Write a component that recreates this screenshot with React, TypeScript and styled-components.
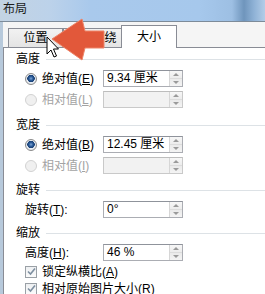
import styled, { createGlobalStyle } from "styled-components";

const GlobalStyle = createGlobalStyle`
    html, body {
        margin: 0;
        padding: 0;
        background: #f0f0f0;
    }
    * {
        box-sizing: border-box;
    }
`;

const Window = styled.div`
    position: relative;
    width: 265px;
    height: 294px;
    overflow: hidden;
    background: #f3f3f3;
    font-family: "Liberation Sans", "Noto Sans CJK SC", sans-serif;
    font-size: 12px;
    color: #000;
    display: flex;
    flex-direction: column;
`;

const TitleBar = styled.div`
    height: 22px;
    flex: none;
    padding: 0 0 0 3px;
    line-height: 19px;
    font-size: 12px;
    color: #1c1c1c;
    background: linear-gradient(90deg, #c3d3e3 0px, #bcd2ea 50px, #a9c9ec 90px, #a6c8ec 200px, #9dbfe3 232px, #6f95bc 244px, #8fb2d6 254px, #b3cde8 265px);
    border-bottom: 1px solid #7d8b99;
`;

const Body = styled.div`
    flex: 1;
    display: flex;
    flex-direction: column;
    border-left: 3px solid #b7c9db;
    background: #f5f5f5;
`;

const TabStrip = styled.div`
    height: 26px;
    flex: none;
    display: flex;
    align-items: flex-end;
    padding-left: 5px;
    position: relative;
    z-index: 1;
    margin-bottom: -1px;
`;

const Tab = styled.div<{ $active?: boolean; $w: number }>`
    width: ${p => p.$w}px;
    height: ${p => (p.$active ? 23 : 20)}px;
    display: flex;
    align-items: center;
    justify-content: center;
    border: 1px solid #898c95;
    border-bottom: ${p => (p.$active ? "none" : "1px solid #898c95")};
    margin-left: ${p => (p.$active ? -1 : 0)}px;
    background: ${p => (p.$active ? "#fff" : "linear-gradient(#f2f2f2, #e4e4e4)")};
    color: #000;
    line-height: 14px;
`;

const Panel = styled.div`
    flex: 1;
    background: #fff;
    border-top: 1px solid #898c95;
    border-left: 1px solid #898c95;
    padding-top: 2px;
`;

const Group = styled.div<{ $gap: number }>`
    margin-top: ${p => p.$gap}px;
`;

const Header = styled.div`
    height: 18px;
    display: flex;
    align-items: center;
    padding-left: 12px;
    gap: 6px;
    line-height: 14px;

    &::after {
        content: "";
        flex: 1;
        height: 1px;
        background: #dde2e6;
        margin-top: 1px;
    }
`;

const Row = styled.div<{ $h?: number }>`
    height: ${p => p.$h ?? 21}px;
    display: flex;
    align-items: center;
    padding-left: 21px;
`;

const Label = styled.div<{ $disabled?: boolean }>`
    width: 78px;
    display: flex;
    align-items: center;
    gap: 5px;
    color: ${p => (p.$disabled ? "#a3a3a3" : "#000")};
    line-height: 14px;
    white-space: nowrap;
`;

const CheckLabel = styled(Label)`
    width: auto;
`;

const Key = styled.span`
    text-decoration: underline;
`;

const Radio = styled.span<{ $checked?: boolean; $disabled?: boolean }>`
    width: 12px;
    height: 12px;
    border-radius: 50%;
    flex: none;
    border: 1px solid ${p => (p.$disabled ? "#d2d2d2" : "#8a8a8a")};
    background: ${p =>
        p.$checked
            ? "radial-gradient(circle at 50% 45%, #7fa7d6 0, #2a5a98 2px, #173e72 3.5px, #e9eef4 4px, #dfe4ea 6px)"
            : p.$disabled
            ? "#f0f0f0"
            : "linear-gradient(#e6e6e6, #fafafa)"};
`;

const Box = styled.span`
    width: 12px;
    height: 12px;
    flex: none;
    border: 1px solid #9aa0a6;
    background: linear-gradient(#eef0f2, #fbfbfb);
    display: flex;
    align-items: center;
    justify-content: center;
`;

const Field = styled.div<{ $disabled?: boolean }>`
    width: 80px;
    height: 17px;
    display: flex;
    border: 1px solid ${p => (p.$disabled ? "#c9c9c9" : "#abadb3")};
    border-top-color: ${p => (p.$disabled ? "#bdbdbd" : "#8f939b")};
    background: ${p => (p.$disabled ? "#f2f2f2" : "#fff")};
`;

const FieldText = styled.div`
    flex: 1;
    padding-left: 3px;
    line-height: 15px;
    white-space: nowrap;
    overflow: hidden;
`;

const Spin = styled.div`
    width: 13px;
    display: flex;
    flex-direction: column;
    border-left: 1px solid #d6d6d6;
`;

const SpinHalf = styled.div<{ $down?: boolean }>`
    flex: 1;
    display: flex;
    align-items: center;
    justify-content: center;
    background: ${p => (p.$down ? "linear-gradient(#eaeaea, #f4f4f4)" : "linear-gradient(#f7f7f7, #ececec)")};
    border-top: ${p => (p.$down ? "1px solid #dcdcdc" : "none")};

    &::before {
        content: "";
        border-left: 3px solid transparent;
        border-right: 3px solid transparent;
        ${p => (p.$down ? "border-top: 3px solid #9a9a9a;" : "border-bottom: 3px solid #9a9a9a;")}
    }
`;

const Overlay = styled.svg`
    position: absolute;
    left: 0;
    top: 0;
    z-index: 5;
    pointer-events: none;
`;

function NumField({ value, disabled }: { value?: string; disabled?: boolean }) {
    return (
        <Field $disabled={disabled}>
            <FieldText>{value}</FieldText>
            <Spin>
                <SpinHalf />
                <SpinHalf $down />
            </Spin>
        </Field>
    );
}

function Check() {
    return (
        <svg width="9" height="9" viewBox="0 0 9 9">
            <path d="M1 4.5 L3.5 7 L8 1.5" fill="none" stroke="#7e8fa0" strokeWidth="1.6" />
        </svg>
    );
}

export default function App() {
    return (
        <>
            <GlobalStyle />
            <Window>
                <TitleBar>布局</TitleBar>
                <Body>
                    <TabStrip>
                        <Tab $w={55}>位置</Tab>
                        <Tab $w={59}>文字环绕</Tab>
                        <Tab $w={56} $active>大小</Tab>
                    </TabStrip>
                    <Panel>
                        <Group $gap={0}>
                            <Header>高度</Header>
                            <Row>
                                <Label><Radio $checked /><span>绝对值(<Key>E</Key>)</span></Label>
                                <NumField value="9.34 厘米" />
                            </Row>
                            <Row>
                                <Label $disabled><Radio $disabled /><span>相对值(<Key>L</Key>)</span></Label>
                                <NumField disabled />
                            </Row>
                        </Group>
                        <Group $gap={6}>
                            <Header>宽度</Header>
                            <Row>
                                <Label><Radio $checked /><span>绝对值(<Key>B</Key>)</span></Label>
                                <NumField value="12.45 厘米" />
                            </Row>
                            <Row>
                                <Label $disabled><Radio $disabled /><span>相对值(<Key>I</Key>)</span></Label>
                                <NumField disabled />
                            </Row>
                        </Group>
                        <Group $gap={5}>
                            <Header>旋转</Header>
                            <Row>
                                <Label><span>旋转(<Key>T</Key>):</span></Label>
                                <NumField value="0°" />
                            </Row>
                        </Group>
                        <Group $gap={4}>
                            <Header>缩放</Header>
                            <Row>
                                <Label><span>高度(<Key>H</Key>):</span></Label>
                                <NumField value="46 %" />
                            </Row>
                            <Row $h={17}>
                                <CheckLabel><Box><Check /></Box><span>锁定纵横比(<Key>A</Key>)</span></CheckLabel>
                            </Row>
                            <Row $h={17}>
                                <CheckLabel><Box><Check /></Box><span>相对原始图片大小(<Key>R</Key>)</span></CheckLabel>
                            </Row>
                        </Group>
                    </Panel>
                </Body>
                <Overlay width="265" height="294" viewBox="0 0 265 294">
                    <polygon
                        points="52,39 82,19 85,31 104,31 104,48 85,48 82,60"
                        fill="#e2583a"
                        stroke="#ee8366"
                        strokeWidth="1"
                        strokeLinejoin="round"
                    />
                    <path
                        d="M47 37 L47 54 L51 50 L54 57 L56.5 56 L53.5 49 L58.5 49 Z"
                        fill="#fff"
                        stroke="#000"
                        strokeWidth="1"
                        strokeLinejoin="round"
                    />
                </Overlay>
            </Window>
        </>
    );
}
